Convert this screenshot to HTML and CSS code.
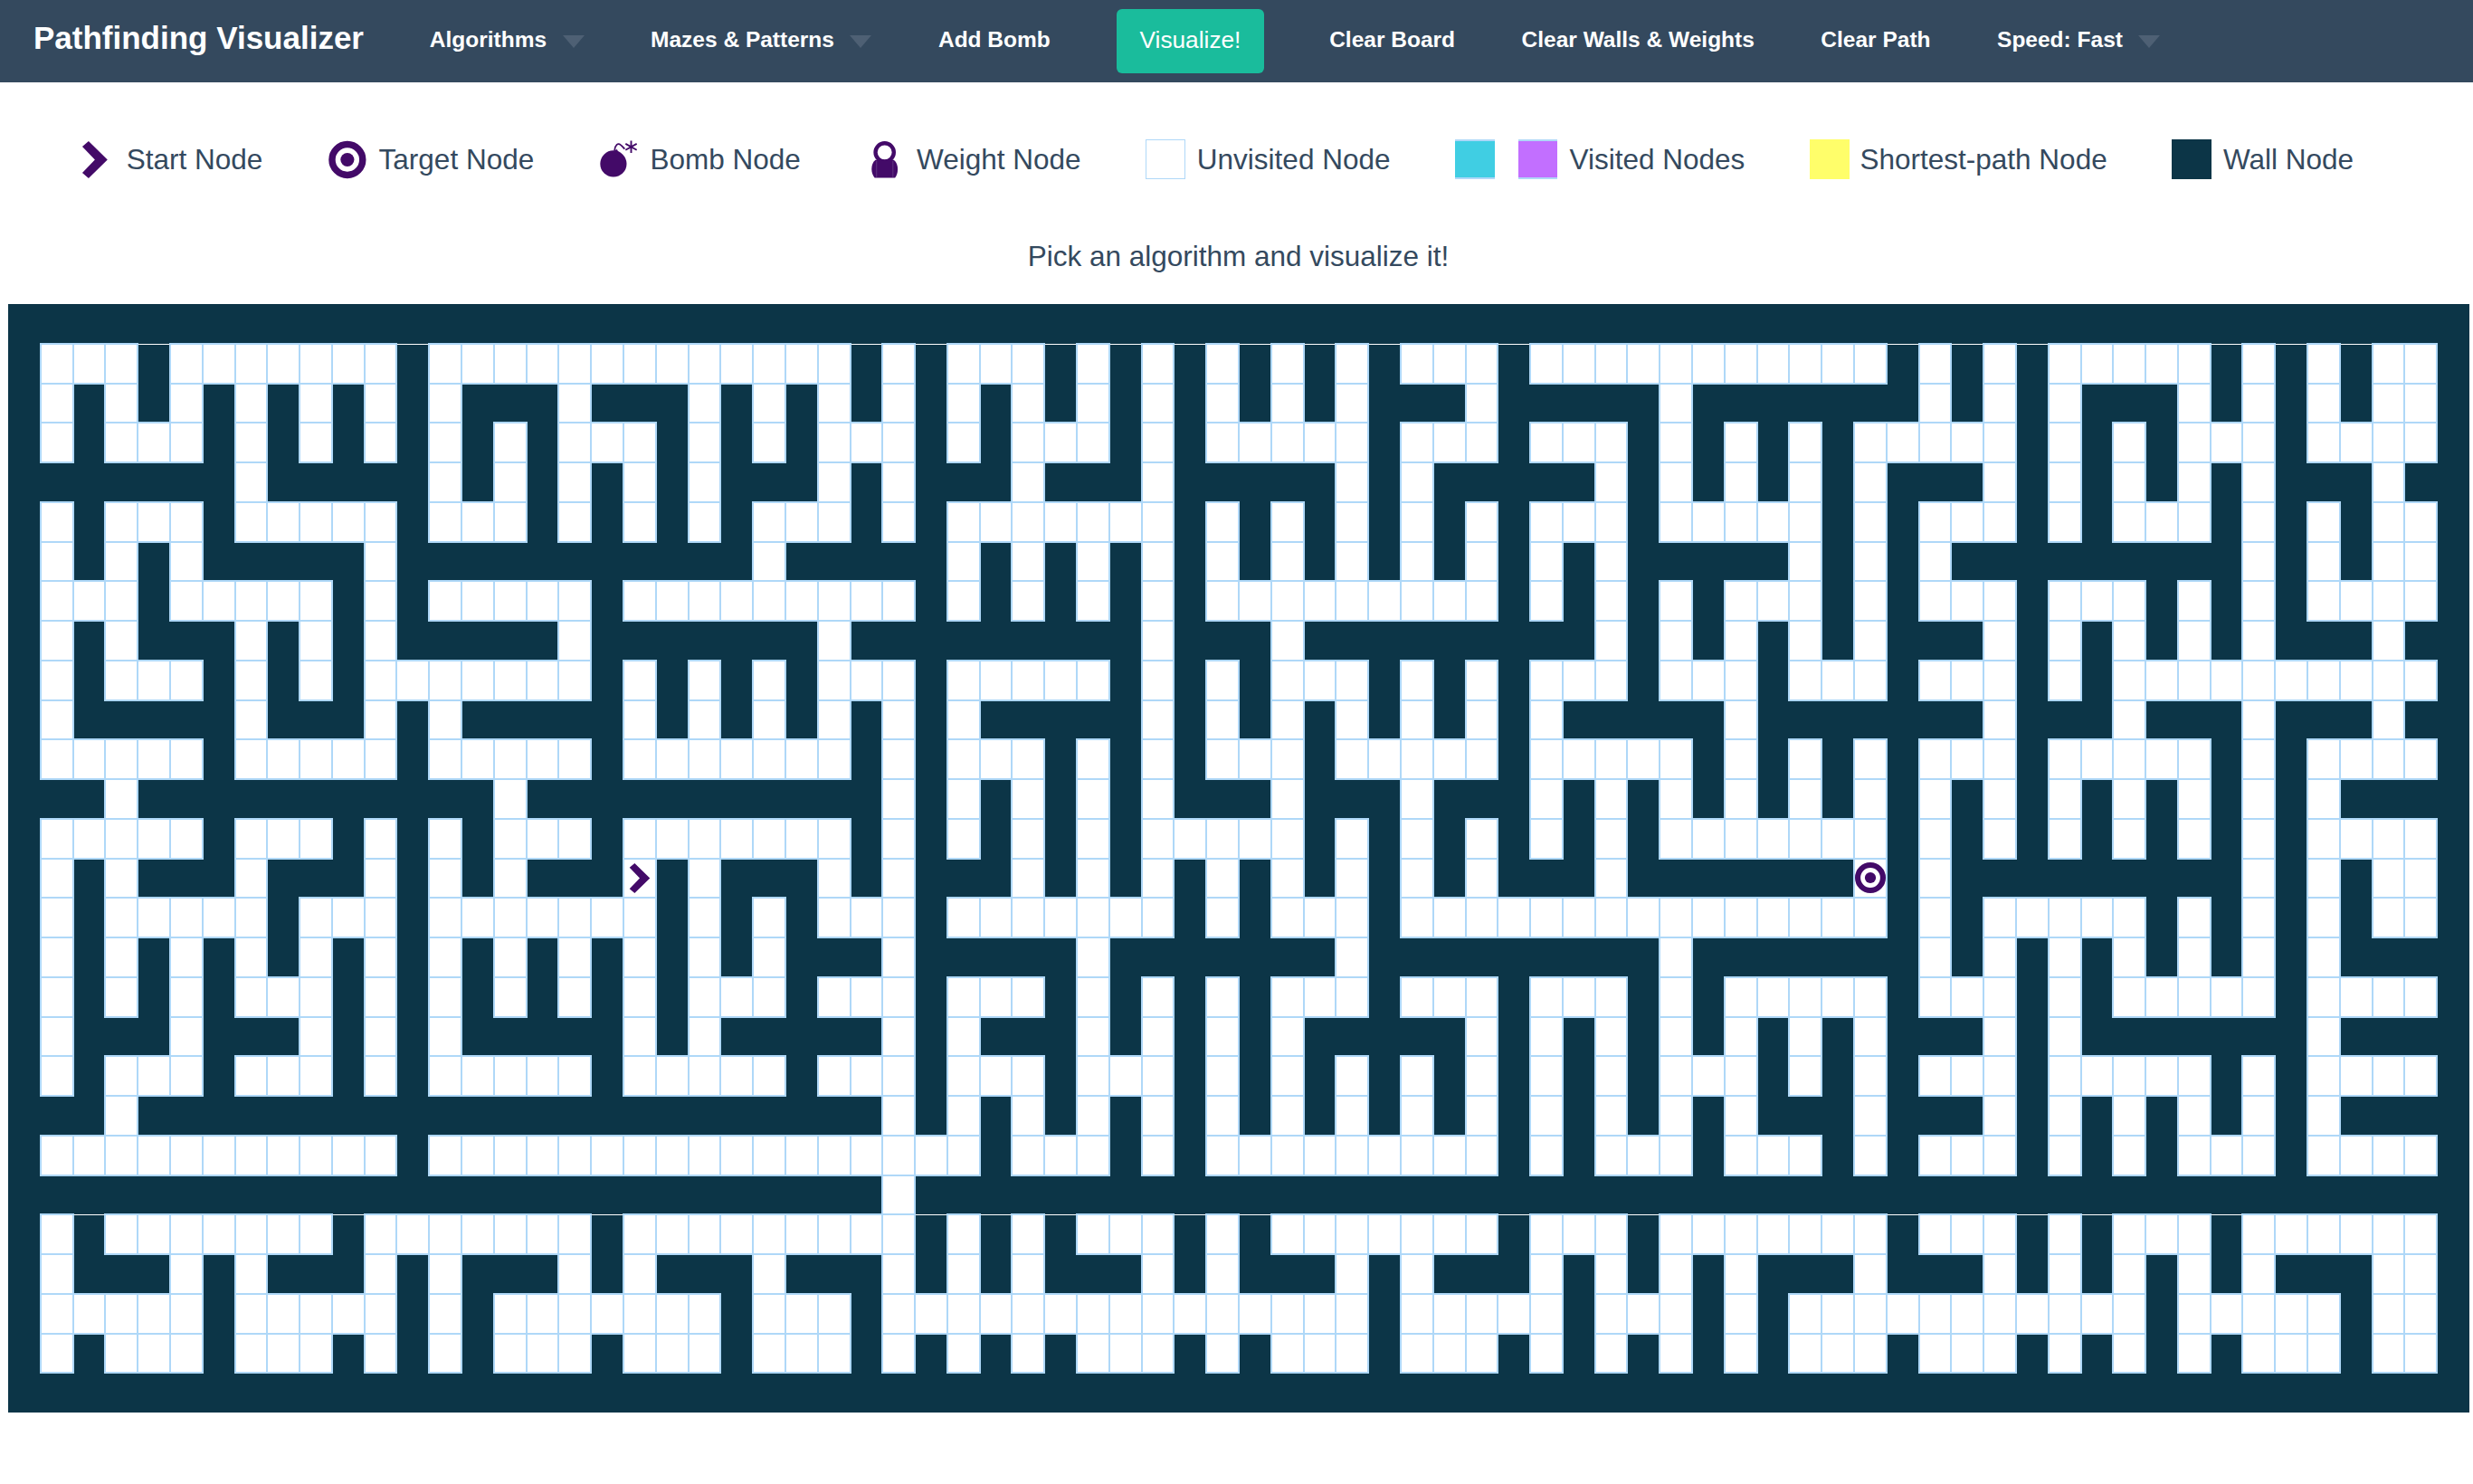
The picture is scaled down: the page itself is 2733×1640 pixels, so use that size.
FILE: index.html
```html
<!DOCTYPE html>
<html lang="en">
<head>
<meta charset="utf-8">
<title>Pathfinding Visualizer</title>
<link rel="stylesheet" href="styles.css">
</head>
<body>

<nav class="navbar">
	<a class="brand">Pathfinding Visualizer</a>
	<ul class="menu">
		<li>Algorithms <span class="caret"></span></li>
		<li>Mazes &amp; Patterns <span class="caret"></span></li>
		<li>Add Bomb</li>
		<li class="go"><button>Visualize!</button></li>
		<li>Clear Board</li>
		<li>Clear Walls &amp; Weights</li>
		<li>Clear Path</li>
		<li>Speed: Fast <span class="caret"></span></li>
	</ul>
</nav>

<ul class="legend">
	<li>
		<svg class="box" viewBox="0 0 44 44"><polygon class="ink" points="8,8 15,2 36,22.5 15,43 8,37 22,22.5"/></svg>
		Start Node
	</li>
	<li>
		<svg class="box" viewBox="0 0 44 44">
			<circle class="ring" cx="22" cy="22.5" r="17"/>
			<circle class="ink" cx="22" cy="22.5" r="7.6"/>
		</svg>
		Target Node
	</li>
	<li>
		<svg class="box" viewBox="0 0 44 44">
			<circle class="ink" cx="16" cy="27" r="14.7"/>
			<polygon class="ink" points="13.5,14 20,11 22.5,16 16,18"/>
			<path class="fuse" d="M17.3 12 C18 6 21 3.5 24 6 C26 7.5 27 9 28.5 10.5"/>
			<path class="spark" d="M35.7 1.5 V15 M29.5 4.8 L41.9 11.7 M29.5 11.7 L41.9 4.8"/>
		</svg>
		Bomb Node
	</li>
	<li>
		<svg class="box" viewBox="0 0 44 44">
			<circle class="handle" cx="21.8" cy="14.3" r="10.2"/>
			<path class="ink" d="M11.5 22.7 H32 C35 25 36.3 29 36.3 33 C36.3 37 35 40.5 33.3 42.7 H10.7 C9 40.5 7.3 37 7.3 33 C7.3 29 8.5 25 11.5 22.7 Z"/>
			<path class="shine" d="M12.8 24 V42 M31 24 V42"/>
		</svg>
		Weight Node
	</li>
	<li><span class="box unvisited"></span>Unvisited Node</li>
	<li><span class="box visited-a"></span><span class="box visited-b"></span>Visited Nodes</li>
	<li><span class="box shortest"></span>Shortest-path Node</li>
	<li><span class="box wallnode"></span>Wall Node</li>
</ul>

<p class="message">Pick an algorithm and visualize it!</p>

<div id="board" class="board"></div>

<svg width="0" height="0" class="defs">
	<symbol id="start" viewBox="0 0 28 41"><polygon points="0,6 7,0 28,20.5 7,41 0,35 14,20.5"/></symbol>
	<symbol id="target" viewBox="0 0 100 100">
		<circle cx="50" cy="50" r="41" fill="none" stroke="#430a68" stroke-width="18"/>
		<circle cx="50" cy="50" r="18"/>
	</symbol>
</svg>

<script src="script.js"></script>
</body>
</html>
```

FILE: styles.css
```css
body{ margin:0; font-family:"Liberation Sans", Arial, sans-serif; color:#34495e; background:#fff; }

.navbar{ display:flex; align-items:center; height:91px; padding-left:37px; background:#34495e; color:#fff; }
.brand{ font-size:35px; font-weight:bold; margin-bottom:8px; margin-right:36px; }
.menu{ display:flex; align-items:center; list-style:none; margin:0; padding:0; }
.menu li{ display:flex; align-items:center; padding:0 36.75px; font-size:24.5px; font-weight:bold; margin-bottom:3px; }
.menu .caret{ margin:3px 0 0 17.5px; border-top:14px solid #4e6074; border-left:12px solid transparent; border-right:12px solid transparent; }
.menu .go{ padding:0; margin:0 35px 0 36px; }
.go button{ height:71px; padding:0 26px 2px; border:0; border-radius:6px; background:#1abc9c; color:#fff; font-family:inherit; font-size:26.25px; }

.legend{ display:flex; align-items:center; gap:71.5px; list-style:none; margin:63px 0 0; padding:0 0 0 83px; font-size:31.5px; }
.legend li{ display:flex; align-items:center; height:44px; }
.box{ display:block; box-sizing:border-box; width:43.75px; height:44px; margin-right:13px; }
.ink{ fill:#430a68; }
.ring{ fill:none; stroke:#430a68; stroke-width:7.5; }
.handle{ fill:none; stroke:#430a68; stroke-width:4.4; }
.fuse{ fill:none; stroke:#430a68; stroke-width:1.8; }
.spark{ fill:none; stroke:#430a68; stroke-width:1.9; }
.shine{ fill:none; stroke:#6d4a8c; stroke-width:.7; }
.unvisited{ border:1px solid #afd8f8; }
.visited-a{ background:#40cee3; border-top:2px solid #afd8f8; border-bottom:2px solid #afd8f8; margin-right:26px; }
.visited-b{ background:#c26fff; border-top:2px solid #afd8f8; border-bottom:2px solid #afd8f8; margin-right:13px; }
.shortest{ background:#fffe6a; margin-right:12px; }
.wallnode{ background:#0c3547; margin-right:13px; }

.message{ margin:0; padding:67px 0 35px 4px; height:36px; line-height:36px; text-align:center; font-size:31.5px; }

.board{ display:grid; grid-template-columns:repeat(76, 1fr); grid-template-rows:repeat(28, 1fr); width:2720px; height:1225px; margin-left:9px; background:#0c3547; }
.cell{ box-sizing:border-box; min-width:0; min-height:0; }
.open{ position:relative; display:flex; align-items:center; justify-content:center; margin:-1px; border:2px solid #afd8f8; background:#fff; }
.seam{ border-top:1px solid #fff; }
.open svg{ fill:#430a68; flex:none; }
.defs{ display:block; }
```

FILE: script.js
```js
// open cells of each row as column runs, everything else is wall
var rows = [
"",
"1-3 5-11 13-25 27 29-31 33 35 37 39 41 43-45 47-57 59 61 63-67 69 71 73-74",
"1 3 5 7 9 11 13 17 21 23 25 27 29 31 33 35 37 39 41 45 51 59 61 63 67 69 71 73-74",
"1 3-5 7 9 11 13 15 17-19 21 23 25-27 29 31-33 35 37-41 43-45 47-49 51 53 55 57-61 63 65 67-69 71-74",
"7 13 15 17 19 21 25 27 31 35 41 43 49 51 53 55 57 61 63 65 67 69 73",
"1 3-5 7-11 13-15 17 19 21 23-25 27 29-35 37 39 41 43 45 47-49 51-55 57 59-61 63 65-67 69 71 73-74",
"1 3 5 11 23 29 31 33 35 37 39 41 43 45 47 49 55 57 59 69 71 73-74",
"1-3 5-9 11 13-17 19-27 29 31 33 35 37-45 47 49 51 53-55 57 59-61 63-65 67 69 71-74",
"1 3 7 9 11 17 25 35 39 49 51 53 55 57 61 63 65 67 69 73",
"1 3-5 7 9 11-17 19 21 23 25-27 29-33 35 37 39-41 43 45 47-49 51-53 55-57 59-61 63 65-74",
"1 7 11 13 19 21 23 25 27 29 35 37 39 41 43 45 47 53 61 65 69 73",
"1-5 7-11 13-17 19-25 27 29-31 33 35 37-39 41-45 47-51 53 55 57 59-61 63-67 69 71-74",
"3 15 27 29 31 33 35 39 43 47 49 51 53 55 57 59 61 63 65 67 69 71",
"1-5 7-9 11 13 15-17 19-25 27 29 31 33 35-39 41 43 45 47 49 51-57 59 61 63 65 67 69 71-74",
"1 3 7 11 13 15 19 21 25 27 31 33 35 37 39 41 43 45 49 57 59 69 71 73-74",
"1 3-7 9-11 13-19 21 23 25-27 29-35 37 39-41 43-57 59 61-65 67 69 71 73-74",
"1 3 5 7 9 11 13 15 17 19 21 23 27 33 41 51 59 61 63 65 67 69 71",
"1 3 5 7-9 11 13 15 17 19 21-23 25-27 29-31 33 35 37 39-41 43-45 47-49 51 53-57 59-61 63 65-69 71-74",
"1 5 9 11 13 19 21 27 29 33 35 37 39 45 47 49 51 53 55 57 61 63 71",
"1 3-5 7-9 11 13-17 19-23 25-27 29-31 33-35 37 39 41 43 45 47 49 51-53 55 57 59-61 63-67 69 71-74",
"3 27 29 31 33 35 37 39 41 43 45 47 49 51 53 57 61 63 65 67 69 71",
"1-11 13-29 31-33 35 37-45 47 49-51 53-55 57 59-61 63 65 67-69 71-74",
"27",
"1 3-9 11-17 19-27 29 31 33-35 37 39-45 47-49 51-57 59-61 63 65-67 69-74",
"1 5 7 11 13 17 19 23 27 29 31 35 37 41 43 47 49 51 53 57 61 63 65 67 69 73-74",
"1-5 7-11 13 15-21 23-25 27-41 43-47 49-51 53 55-65 67-71 73-74",
"1 3-5 7-9 11 13 15-17 19-21 23-25 27 29 31 33-35 37 39-41 43-45 47 49 51 53 55-57 59-61 63 65 67 69-71 73-74",
""
];

var board = document.getElementById("board");

function icon(name, w, h){
	return '<svg width="' + w + '" height="' + h + '"><use href="#' + name + '"/></svg>';
}

for (var r = 0; r < rows.length; r++){
	var open = {};
	var runs = rows[r] ? rows[r].split(" ") : [];
	for (var i = 0; i < runs.length; i++){
		var p = runs[i].split("-");
		var to = p[1] ? +p[1] : +p[0];
		for (var c = +p[0]; c <= to; c++) open[c] = true;
	}
	for (var c = 0; c < 76; c++){
		var cell = document.createElement("div");
		cell.className = open[c] ? "cell open" : "cell";
		if (!open[c] && (r == 1 || r == 23) && c > 0 && c < 75) cell.className += " seam";
		if (r == 14 && c == 19){ cell.className = "cell open"; cell.innerHTML = icon("start", 24, 33); }
		if (r == 14 && c == 57){ cell.className = "cell open"; cell.innerHTML = icon("target", 34, 34); }
		board.appendChild(cell);
	}
}
```
